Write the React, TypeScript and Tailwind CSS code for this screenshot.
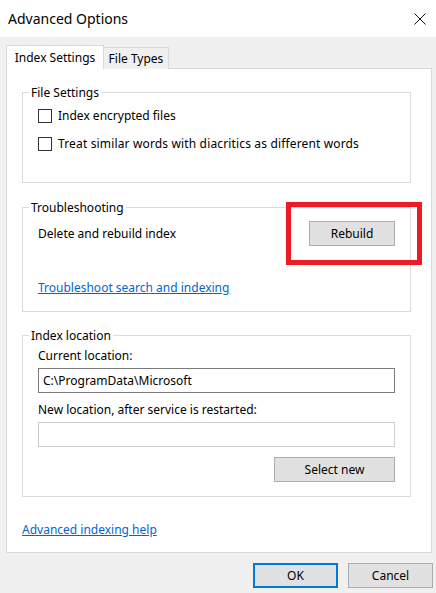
export default function App() {
  return (
    <div className="w-[436px] h-[593px] bg-[#f0f0f0] flex flex-col text-[12px] text-black font-['Noto_Sans',sans-serif] leading-[16px]">
      {/* Title bar */}
      <div className="h-[37px] bg-white flex items-center justify-between pl-[8px] pr-[10px] shrink-0">
        <span className="text-[14px] leading-[20px]">Advanced Options</span>
        <svg width="12" height="12" viewBox="0 0 12 12" className="block">
          <path d="M0.5 0.5 L11.5 11.5 M11.5 0.5 L0.5 11.5" stroke="#111" strokeWidth="1" fill="none" />
        </svg>
      </div>

      {/* Tabs */}
      <div className="flex items-end pl-[6px] mt-[8px] h-[24px] relative z-10">
        <div className="w-[98px] h-[24px] bg-white border border-b-0 border-[#d9d9d9] flex items-center justify-center relative z-10">
          Index Settings
        </div>
        <div className="w-[66px] h-[22px] ml-[-1px] bg-[#f0f0f0] border border-b-0 border-[#d9d9d9] flex items-center justify-center">
          File Types
        </div>
      </div>

      {/* Panel */}
      <div className="relative ml-[6px] mt-[-1px] w-[426px] h-[485px] bg-white border border-[#d9d9d9] pl-[15px] pr-[20px] pt-[16px] flex flex-col">
        {/* File Settings */}
        <fieldset className="border border-[#dcdcdc] p-0 m-0 min-w-0">
          <legend className="ml-[6px] px-[2px] leading-[15px]">File Settings</legend>
          <div className="px-[15px] pt-[8px] pb-[30px] flex flex-col gap-[12px]">
            <div className="flex items-center h-[16px]">
              <span className="w-[14px] h-[14px] border border-[#333] bg-white shrink-0" />
              <span className="ml-[6px]">Index encrypted files</span>
            </div>
            <div className="flex items-center h-[16px]">
              <span className="w-[14px] h-[14px] border border-[#333] bg-white shrink-0" />
              <span className="ml-[6px] tracking-[0.15px]">Treat similar words with diacritics as different words</span>
            </div>
          </div>
        </fieldset>

        {/* Troubleshooting */}
        <fieldset className="border border-[#dcdcdc] p-0 m-0 min-w-0 mt-[17px]">
          <legend className="ml-[6px] px-[2px] leading-[15px]">Troubleshooting</legend>
          <div className="px-[15px] pt-[6px] pb-[15px] flex flex-col">
            <div className="flex items-center justify-between h-[25px]">
              <span>Delete and rebuild index</span>
              <button className="w-[86px] h-[25px] bg-[#e1e1e1] border border-[#adadad] flex items-center justify-center">
                Rebuild
              </button>
            </div>
            <a className="mt-[34px] text-[#0066cc] underline self-start">Troubleshoot search and indexing</a>
          </div>
        </fieldset>

        {/* Index location */}
        <fieldset className="border border-[#dcdcdc] p-0 m-0 min-w-0 mt-[16px]">
          <legend className="ml-[6px] px-[2px] leading-[15px]">Index location</legend>
          <div className="px-[15px] pt-[5px] pb-[14px] flex flex-col">
            <span>Current location:</span>
            <div className="mt-[4px] h-[25px] border border-[#7a7a7a] bg-white flex items-center pl-[4px]">
              C:\ProgramData\Microsoft
            </div>
            <span className="mt-[9px]">New location, after service is restarted:</span>
            <div className="mt-[4px] h-[25px] border border-[#cccccc] bg-white" />
            <button className="mt-[10px] self-end w-[121px] h-[25px] bg-[#e1e1e1] border border-[#adadad] flex items-center justify-center">
              Select new
            </button>
          </div>
        </fieldset>

        <a className="mt-[25px] text-[#0066cc] underline self-start">Advanced indexing help</a>

        {/* Red highlight */}
        <div className="absolute left-[279px] top-[133px] w-[136px] h-[63px] border-[5px] border-[#ed1c24] pointer-events-none" />
      </div>

      {/* Buttons */}
      <div className="flex justify-end gap-[10px] mt-[10px] pr-[3px]">
        <button className="w-[85px] h-[25px] bg-[#e1e1e1] border-2 border-[#0078d7] flex items-center justify-center">OK</button>
        <button className="w-[85px] h-[25px] bg-[#e1e1e1] border border-[#adadad] flex items-center justify-center">Cancel</button>
      </div>
    </div>
  );
}
